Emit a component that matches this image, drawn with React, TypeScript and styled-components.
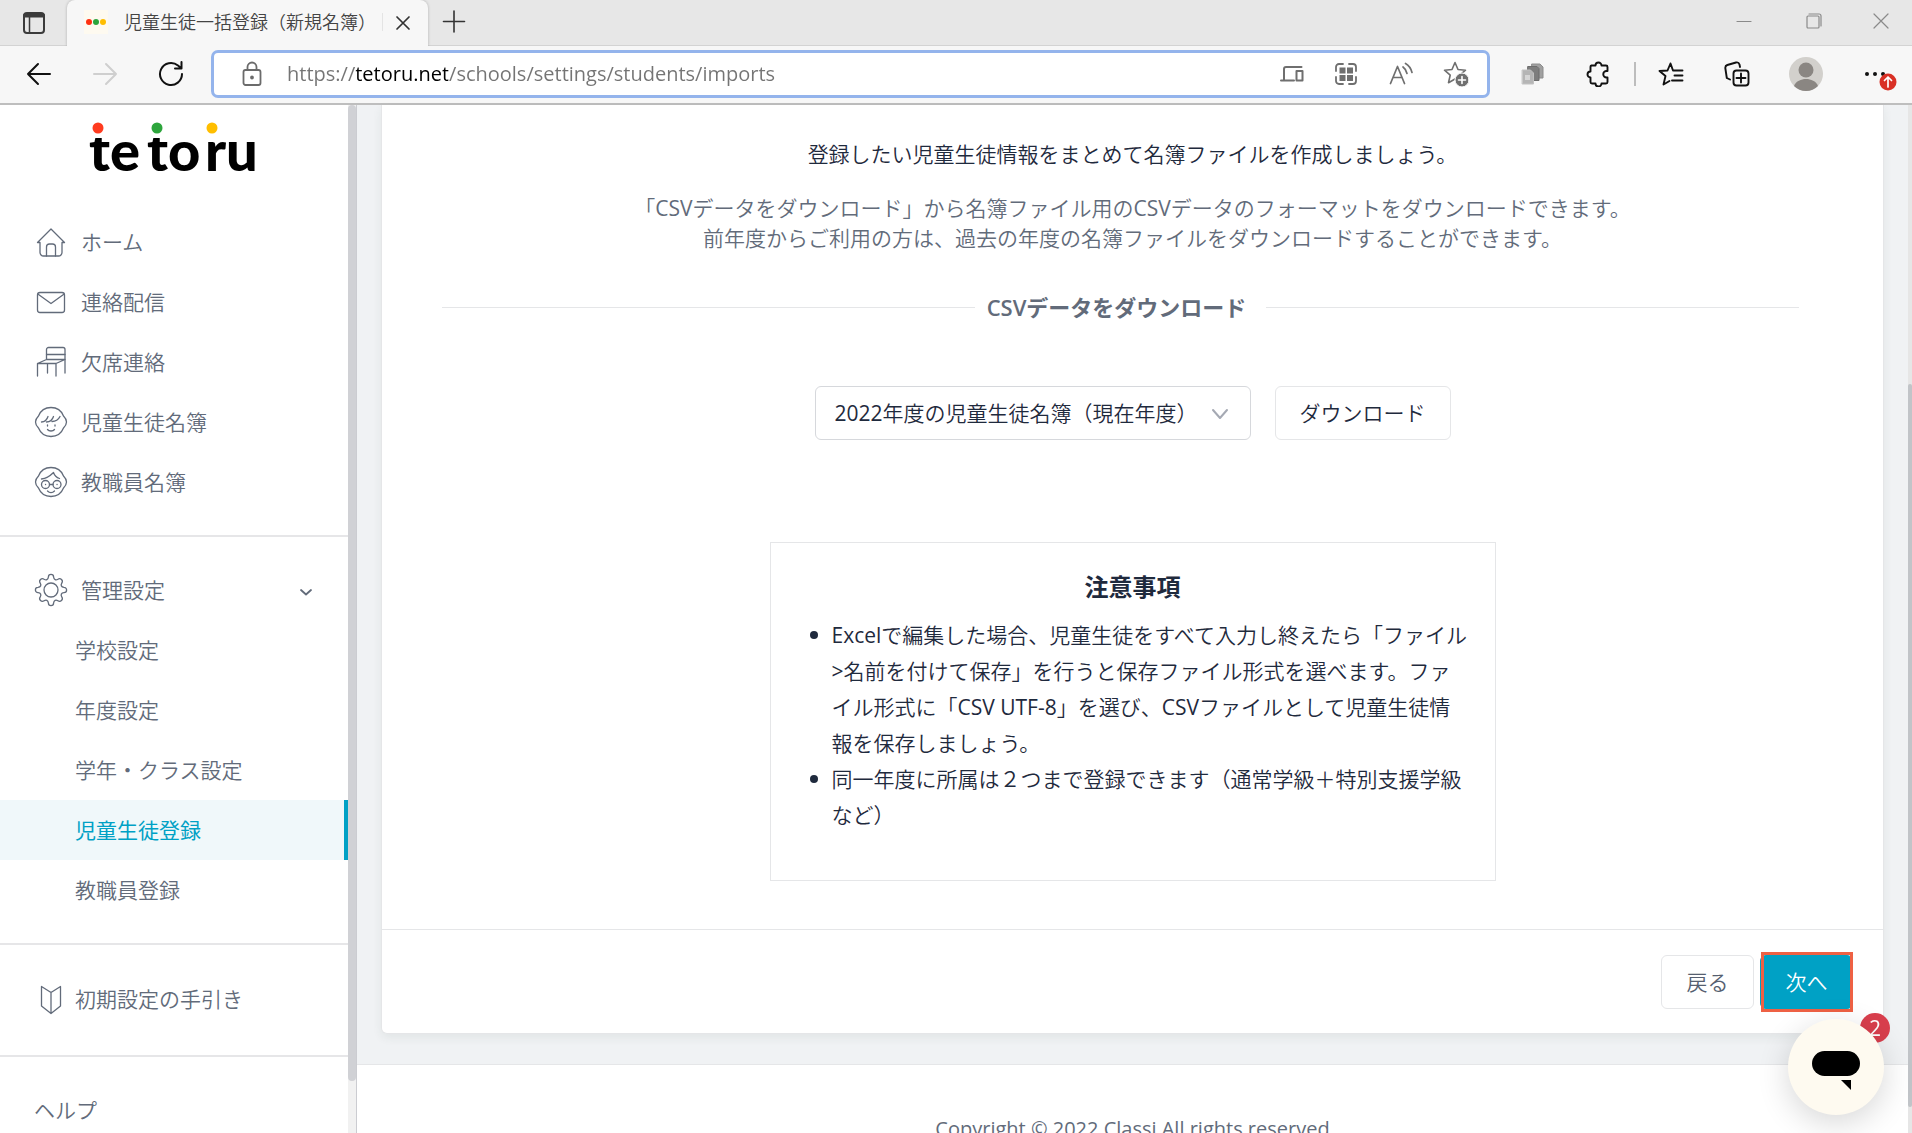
import React from 'react';
import styled, { createGlobalStyle, css } from 'styled-components';

const textStack = '"Open Sans", "Noto Sans CJK JP DemiLight", "Noto Sans CJK JP", sans-serif';
const strongStack = '"Open Sans", "Noto Sans CJK JP", sans-serif';
const ink = '#1f2a3d';
const slate = '#626b7a';
const line = '#e5e6e8';
const teal = '#00a1c5';

const GlobalStyle = createGlobalStyle`
  *, *::before, *::after { box-sizing: border-box; }
  body { margin: 0; font-family: ${textStack}; color: ${ink}; background: #fff; }
  button, input, select { font: inherit; color: inherit; margin: 0; }
  ul { margin: 0; padding: 0; list-style: none; }
  p, h2 { margin: 0; }
  svg { display: block; flex: none; }
`;

const Window = styled.div`
  height: 100vh;
  display: flex;
  flex-direction: column;
  overflow: hidden;
`;

/* ---------- browser chrome ---------- */

const TitleBar = styled.header`
  display: flex;
  height: 46px;
  background: #e7e7e7;
  border-bottom: 1px solid #d3d3d3;
`;

const PlainButton = styled.button`
  display: flex;
  align-items: center;
  justify-content: center;
  flex: none;
  padding: 0;
  border: 0;
  background: none;
`;

const BarButton = styled(PlainButton)<{ $width: number }>`
  width: ${(p) => p.$width}px;
  height: 100%;
`;

const BrowserTab = styled.div`
  display: flex;
  align-items: center;
  width: 361px;
  height: 46px;
  padding: 0 14px 3px 17px;
  background: #f7f7f7;
  border-radius: 8px 8px 0 0;
  box-shadow: 0 0 3px rgba(0, 0, 0, 0.25);
  clip-path: inset(0 -4px 0 -4px);
`;

const TabTitle = styled.span`
  flex: 1;
  margin-left: 16px;
  font-size: 18px;
  line-height: 26px;
  color: #444;
  white-space: nowrap;
`;

const TabRule = styled.span`
  width: 1px;
  height: 18px;
  margin-right: 9px;
  background: #e4e4e4;
`;

const WindowControls = styled.div`
  display: flex;
  height: 42px;
  margin-left: auto;
`;

const Toolbar = styled.div`
  display: flex;
  align-items: stretch;
  height: 59px;
  flex: none;
  padding: 4px 0 5px 6px;
  background: #f7f7f7;
  border-bottom: 2px solid #bebebe;
`;

const AddressBar = styled.label`
  display: flex;
  flex: 1;
  align-items: center;
  margin: 0 10px 0 7px;
  padding: 0 4px 0 27px;
  background: #fff;
  border: 3px solid #94b4ec;
  border-radius: 7px;
`;

const AddressInput = styled.input`
  flex: 1;
  min-width: 0;
  height: 30px;
  margin-left: 24px;
  padding: 0;
  border: 0;
  outline: 0;
  font-size: 20px;
  line-height: 30px;
  color: transparent;
  background: linear-gradient(90deg, #747474 69px, #000 69px, #000 161px, #747474 161px);
  background-clip: text;
  -webkit-background-clip: text;
`;

const ToolbarRule = styled.span`
  width: 2px;
  height: 24px;
  align-self: center;
  margin: 0 2px;
  background: #bdbdbd;
`;

/* ---------- page ---------- */

const Page = styled.div`
  display: flex;
  flex: 1;
  min-height: 0;
`;

const Sidebar = styled.aside`
  width: 348px;
  flex: none;
  overflow: hidden;
  background: #fff;
`;

const Track = styled.div<{ $width: number; $color: string }>`
  width: ${(p) => p.$width}px;
  flex: none;
  display: flex;
  flex-direction: column;
  background: ${(p) => p.$color};
`;

const SideTrack = styled(Track)`
  border-right: 1px solid #cbccd1;
`;

const Space = styled.div<{ $grow: number }>`
  flex: ${(p) => p.$grow} 0 0;
`;

const Thumb = styled.div<{ $grow: number; $color: string }>`
  flex: ${(p) => p.$grow} 0 0;
  border-radius: 4px;
  background: ${(p) => p.$color};
`;

const LogoLink = styled.a`
  display: block;
  height: 107px;
  padding: 3px 0 0 80px;
`;

const NavSection = styled.nav<{ $top: number; $bottom: number }>`
  padding: ${(p) => p.$top}px 0 ${(p) => p.$bottom}px;
  & + & { border-top: 2px solid #e6e6e8; }
`;

const navRow = css`
  display: flex;
  align-items: center;
  width: 100%;
  height: 60px;
  font-size: 21px;
  line-height: 30px;
  color: ${slate};
  text-decoration: none;
`;

const NavLink = styled.a<{ $gap?: number }>`
  ${navRow}
  gap: ${(p) => p.$gap ?? 13}px;
  padding-left: 34px;
`;

const NavToggle = styled.button`
  ${navRow}
  gap: 13px;
  padding: 0 35px 0 34px;
  border: 0;
  background: none;
  svg:last-child { margin-left: auto; }
`;

const SubLink = styled.a<{ $active?: boolean }>`
  ${navRow}
  padding-left: 75px;
  ${(p) =>
    p.$active &&
    css`
      color: ${teal};
      font-family: ${strongStack};
      background: #f0f8fa;
      border-right: 4px solid ${teal};
    `}
`;

const Main = styled.main`
  flex: 1;
  min-width: 0;
  background: #f0f2f4;
`;

const Card = styled.section`
  display: flex;
  flex-direction: column;
  align-items: center;
  margin: 0 24px 30px;
  padding-top: 34px;
  background: #fff;
  border: 1px solid ${line};
  border-top: 0;
  border-radius: 0 0 6px 6px;
  box-shadow: 0 4px 10px rgba(40, 70, 60, 0.07);
`;

const Lead = styled.p`
  font-size: 21px;
  line-height: 30px;
`;

const Note = styled.p`
  margin-top: 24px;
  font-size: 21px;
  line-height: 30px;
  color: ${slate};
  text-align: center;
`;

const RuledHeading = styled.h2`
  display: flex;
  align-items: center;
  align-self: stretch;
  margin: 39px 84px 0 60px;
  font-family: ${strongStack};
  font-size: 22px;
  font-weight: 600;
  line-height: 30px;
  color: ${slate};
  &::before, &::after {
    content: '';
    flex: 1;
    height: 1px;
    background: ${line};
  }
  span { padding: 0 20px 0 12px; }
`;

const DownloadRow = styled.div`
  display: flex;
  gap: 24px;
  margin-top: 64px;
`;

const SelectBox = styled.label`
  position: relative;
  width: 436px;
  svg {
    position: absolute;
    right: 22px;
    top: 21px;
    pointer-events: none;
  }
`;

const YearSelect = styled.select`
  appearance: none;
  width: 100%;
  height: 54px;
  padding: 0 50px 0 19px;
  font-size: 21px;
  line-height: 30px;
  color: ${ink};
  background: #fff;
  border: 1px solid #d6d8dc;
  border-radius: 6px;
`;

const Button = styled.button`
  min-width: 93px;
  height: 54px;
  padding: 0 24px;
  font-size: 21px;
  line-height: 30px;
  background: #fff;
  border: 1px solid ${line};
  border-radius: 6px;
`;

const BackButton = styled(Button)`
  color: #565f70;
`;

const NextButton = styled(Button)`
  position: relative;
  color: #fff;
  background: ${teal};
  border-color: ${teal};
  &::after {
    content: '';
    position: absolute;
    inset: -4px -1px -4px 0;
    border: 3px solid #ee6144;
  }
`;

const NoticeBox = styled.section`
  width: 726px;
  margin: 102px 0 48px;
  padding: 24px 26px 47px 61px;
  border: 1px solid ${line};
`;

const NoticeTitle = styled.h2`
  margin: 0 0 10px -35px;
  font-family: ${strongStack};
  font-size: 24px;
  font-weight: 700;
  line-height: 40px;
  text-align: center;
`;

const NoticeList = styled.ul`
  font-size: 21px;
  line-height: 36px;
`;

const NoticeItem = styled.li`
  position: relative;
  &::before {
    content: '';
    position: absolute;
    left: -22px;
    top: 14px;
    width: 8px;
    height: 8px;
    border-radius: 50%;
    background: ${ink};
  }
`;

const CardFooter = styled.footer`
  display: flex;
  align-self: stretch;
  justify-content: flex-end;
  gap: 6px;
  padding: 25px 30px 24px;
  border-top: 1px solid ${line};
`;

const SiteFooter = styled.footer`
  height: 120px;
  padding-top: 49px;
  background: #fff;
  border-top: 1px solid ${line};
  font-size: 20px;
  line-height: 30px;
  color: ${slate};
  text-align: center;
`;

const Chat = styled.button`
  position: fixed;
  right: 28px;
  bottom: 18px;
  width: 96px;
  height: 96px;
  padding: 0;
  border: 0;
  background: none;
`;

const ChatBadge = styled.span`
  position: absolute;
  top: -6px;
  right: -6px;
  width: 30px;
  height: 30px;
  border-radius: 50%;
  background: #d93f4d;
  color: #fff;
  font-size: 21px;
  line-height: 30px;
  text-align: center;
`;

const ChatFace = styled.span`
  position: relative;
  display: flex;
  align-items: center;
  justify-content: center;
  width: 96px;
  height: 96px;
  padding-top: 8px;
  border-radius: 50%;
  background: #fefaf0;
  box-shadow: 0 8px 32px rgba(0, 0, 0, 0.16);
`;

/* ---------- drawings ---------- */

type IconProps = {
  w?: number;
  h?: number;
  color?: string;
  stroke?: number;
  children: React.ReactNode;
};

const Icon = ({ w = 24, h = 24, color = '#111', stroke = 2, children }: IconProps) => (
  <svg
    width={w}
    height={h}
    viewBox={`0 0 ${w} ${h}`}
    fill="none"
    stroke={color}
    strokeWidth={stroke}
    strokeLinecap="round"
    strokeLinejoin="round"
    aria-hidden="true"
  >
    {children}
  </svg>
);

const Logo = () => (
  <svg width="190" height="90" viewBox="-6 -10 190 90" role="img" aria-label="tetoru">
    <g fontFamily='"Lato", sans-serif' fontWeight="900" fontSize="56" fill="#000">
      <text x="3" y="53">te</text>
      <text x="61" y="53">to</text>
      <text x="119" y="53">ru</text>
    </g>
    <path d="M0 0h176v20H0z" fill="#fff" />
    <circle cx="12" cy="10" r="5.5" fill="#ff3b1f" />
    <circle cx="71" cy="10" r="5.5" fill="#2da53c" />
    <circle cx="126" cy="10" r="5.5" fill="#ffbe00" />
  </svg>
);

const side = { w: 34, h: 34, color: slate, stroke: 1.3 };

const HomeIcon = () => (
  <Icon {...side}>
    <path d="M6 17.500H3.500L17 4l13.500 13.500H28v10a3.500 3.500 0 0 1-3.500 3.500h-15A3.500 3.500 0 0 1 6 27.500V17.500" />
    <path d="M12.500 31v-9a3 3 0 0 1 3-3h3a3 3 0 0 1 3 3v9" />
  </Icon>
);
const MailIcon = () => (
  <Icon {...side}>
    <rect x="3.500" y="7.500" width="27" height="20" rx="2.500" />
    <path d="M4.500 9.500 17 18.500l12.500-9" />
  </Icon>
);
const ChairIcon = () => (
  <Icon {...side}>
    <path d="M12.500 14V4.500a2 2 0 0 1 2-2H29a2 2 0 0 1 2 2V28" />
    <path d="M12.500 9.500H31M12.500 14.500H31L22 18.500H3.500l9-4M3.500 18.500V31M13.500 18.500V28M22 18.500V31" />
  </Icon>
);
const head = 'M17 2.500c6 0 10.500 3.500 12.500 8.500 1.500 1.500 3 3.500 3 6s-1.500 4.500-3 6c-2 5-6.500 8.500-12.500 8.500S6.500 28 4.500 23c-1.500-1.500-3-3.500-3-6s1.500-4.500 3-6C6.500 6 11 2.500 17 2.500z';
const StudentIcon = () => (
  <Icon {...side}>
    <path d={head} />
    <path d="M7.500 17c3 0 5.500-2.500 6.500-5.500M12.500 17c3.500 0 6-2.500 7-5.500M18 16.500c4 0 6.500-2 8-5" />
    <path d="M13.500 20v1M21 20v1M13.500 24.500c1.500 2 5.500 2 7 0" />
  </Icon>
);
const TeacherIcon = () => (
  <Icon {...side}>
    <path d={head} />
    <path d="M7.500 14c5-.5 8-2.500 12-6.500 1 3 3 5 6 6" />
    <circle cx="11.500" cy="19.500" r="4" />
    <circle cx="23" cy="19.500" r="4" />
    <path d="M15.500 19.500H19M11.500 19.500h.1M23 19.500h.1M13.500 26c2 2 5 2 7 0" />
  </Icon>
);
const GearIcon = () => (
  <Icon {...side}>
    <path d="M14.400 4a2.600 2.600 0 0 1 5.200 0c.3 2.800 2.300 3.500 4.300 2.200 2.600-1.800 5.700 1.300 3.900 3.900-1.300 2-.6 4 2.200 4.300a2.600 2.600 0 0 1 0 5.200c-2.800.3-3.500 2.300-2.200 4.300 1.800 2.600-1.300 5.700-3.900 3.900-2-1.300-4-.6-4.300 2.200a2.600 2.600 0 0 1-5.200 0c-.3-2.800-2.300-3.500-4.300-2.200-2.600 1.800-5.700-1.300-3.900-3.900 1.300-2 .6-4-2.200-4.300a2.600 2.600 0 0 1 0-5.200c2.800-.3 3.500-2.300 2.200-4.300-1.800-2.600 1.300-5.700 3.900-3.900 2 1.300 4 .6 4.300-2.200z" />
    <circle cx="17" cy="17" r="7" />
  </Icon>
);
const GuideIcon = () => (
  <Icon {...side}>
    <path d="M7.500 4.500l9.500 6 9.500-6V24L17 31.500 7.500 24zM17 10.500v21" />
  </Icon>
);

const starPath = 'M12 1.500l3 7 7.500.7-5.700 5 1.700 7.500L12 18l-6.500 3.700 1.700-7.500-5.700-5L9 8.500z';

const navItems = [
  { label: 'ホーム', icon: <HomeIcon /> },
  { label: '連絡配信', icon: <MailIcon /> },
  { label: '欠席連絡', icon: <ChairIcon /> },
  { label: '児童生徒名簿', icon: <StudentIcon /> },
  { label: '教職員名簿', icon: <TeacherIcon /> },
];

const settingItems = ['学校設定', '年度設定', '学年・クラス設定', '児童生徒登録', '教職員登録'];

const BrowserChrome = () => (
  <>
    <TitleBar>
      <BarButton $width={67} aria-label="タブ操作メニュー">
        <Icon w={24} h={32} color="#3b3b3b">
          <rect x="2" y="6" width="20" height="20" rx="3" />
          <path d="M3 8.500h18" strokeWidth="4" />
          <path d="M7.500 10v16" strokeWidth="1.500" />
        </Icon>
      </BarButton>
      <BrowserTab>
        <Icon w={24} h={24} stroke={0}>
          <rect width="24" height="24" fill="#fefaf0" />
          <circle cx="5" cy="12" r="3" fill="#ff3010" />
          <circle cx="12" cy="12" r="3" fill="#2da53c" />
          <circle cx="19" cy="12" r="3" fill="#ffbe00" />
        </Icon>
        <TabTitle>児童生徒一括登録（新規名簿）</TabTitle>
        <TabRule />
        <PlainButton aria-label="タブを閉じる">
          <Icon w={22} h={24} color="#333" stroke={1.700}>
            <path d="M5 7l12 12M17 7 5 19" />
          </Icon>
        </PlainButton>
      </BrowserTab>
      <BarButton $width={52} aria-label="新しいタブ">
        <Icon w={24} h={34} color="#333" stroke={1.600}>
          <path d="M12 5v21M1.500 15.500h21" />
        </Icon>
      </BarButton>
      <WindowControls>
        <BarButton $width={68} aria-label="最小化">
          <Icon w={16} h={16} color="#8a8a8a" stroke={1.200}><path d="M1 8.500h14" /></Icon>
        </BarButton>
        <BarButton $width={72} aria-label="元に戻す">
          <Icon w={16} h={16} color="#8a8a8a" stroke={1.200}>
            <rect x="1" y="3" width="12" height="12" rx="1" />
            <path d="M3 1h10a2 2 0 0 1 2 2v10" />
          </Icon>
        </BarButton>
        <BarButton $width={62} aria-label="閉じる">
          <Icon w={16} h={16} color="#8a8a8a" stroke={1.200}><path d="M1 1l14 14M15 1 1 15" /></Icon>
        </BarButton>
      </WindowControls>
    </TitleBar>
    <Toolbar>
      <BarButton $width={66} aria-label="戻る"><Icon w={26} h={24}><path d="M24 12H2M12 2 2 12l10 10" /></Icon></BarButton>
      <BarButton $width={66} aria-label="進む"><Icon w={26} h={24} color="#cfcfcf"><path d="M2 12h22M14 2l10 10-10 10" /></Icon></BarButton>
      <BarButton $width={66} aria-label="更新">
        <Icon w={26} h={26}><path d="M24 13a11 11 0 1 1-4-8.500l3 2.500M23.500 1v6.500H17" /></Icon>
      </BarButton>
      <AddressBar>
        <Icon w={22} h={26} color="#6b6b6b" stroke={1.800}>
          <rect x="2.500" y="9" width="17" height="15" rx="2" />
          <path d="M6.500 9V6a4.500 4.500 0 0 1 9 0v3" />
          <circle cx="11" cy="16.500" r="1" fill="#6b6b6b" />
        </Icon>
        <AddressInput aria-label="アドレス" type="text" spellCheck={false} defaultValue="https://tetoru.net/schools/settings/students/imports" />
        <BarButton $width={55} aria-label="デバイスに送信">
          <Icon color="#6f6f6f"><path d="M21.500 5H6a2 2 0 0 0-2 2v11M1 18.500h13" /><rect x="16.500" y="9" width="6" height="9.500" /></Icon>
        </BarButton>
        <BarButton $width={54} aria-label="アプリ">
          <Icon color="#6f6f6f" stroke={1.800}>
            <path d="M2 9V5a3 3 0 0 1 3-3h4M15 2h4a3 3 0 0 1 3 3v4M22 15v4a3 3 0 0 1-3 3h-4M9 22H5a3 3 0 0 1-3-3v-4" />
            <path d="M5.500 5.500h6v6h-6zM13 5.500h6v6h-6zM5.500 13h6v6h-6zM13 13h6v6h-6z" fill="#6f6f6f" stroke="none" />
          </Icon>
        </BarButton>
        <BarButton $width={55} aria-label="音声で読み上げる">
          <Icon color="#6f6f6f" stroke={1.700}>
            <path d="M1.500 21.500 8.500 4.500l7 17M4 15.500h9M14 5c2 1.500 3.500 3.500 4 6.500M16.500 1.500c3.500 2 5.500 5 6.500 9" />
          </Icon>
        </BarButton>
        <BarButton $width={55} aria-label="お気に入りに追加">
          <Icon w={26} h={26} color="#6f6f6f" stroke={1.600}>
            <path d={starPath} />
            <circle cx="19" cy="19" r="7" fill="#6f6f6f" stroke="#fff" strokeWidth="1" />
            <path d="M19 15.500v7M15.500 19h7" stroke="#fff" />
          </Icon>
        </BarButton>
      </AddressBar>
      <BarButton $width={66} aria-label="拡張機能のページ">
        <Icon stroke={1}>
          <path d="M11 2h8l3 3v11H11z" fill="#a0a0a0" stroke="#8c8c8c" />
          <path d="M7 4.500h9l2 2v12H7z" fill="#7d7d7d" stroke="#6d6d6d" />
          <path d="M1.500 8h8l3 3v11h-11z" fill="#b5b5b5" stroke="#c2c2c2" />
          <path d="M4 13h5v5H4z" fill="#d6d6d6" stroke="none" />
        </Icon>
      </BarButton>
      <BarButton $width={66} aria-label="拡張機能">
        <Icon w={26} h={26} stroke={1.900}>
          <path d="M5.500 4.500h4a3 3 0 0 1 6 0H20a1.500 1.500 0 0 1 1.500 1.500v4h-1a3 3 0 0 0 0 6.500h1V21a1.500 1.500 0 0 1-1.500 1.500h-4.500a3 3 0 0 1-6 0H6A1.500 1.500 0 0 1 4.500 21v-4.500a3 3 0 0 1 0-6V6A1.500 1.500 0 0 1 5.500 4.500z" />
        </Icon>
      </BarButton>
      <ToolbarRule />
      <BarButton $width={66} aria-label="お気に入り">
        <Icon w={26} h={26} stroke={1.900}>
          <path d="M15 9.500 12.500 2.500 9.500 9.500 1.500 10l6 5-2 8.500 6-3.500M16 9.500h8.500M16.500 14.500h8M14 19.500h10.500" />
        </Icon>
      </BarButton>
      <BarButton $width={66} aria-label="コレクション">
        <Icon w={26} h={26} stroke={1.900}>
          <rect x="9.500" y="9.500" width="15" height="15" rx="3" />
          <path d="M17 12.500v9M12.500 17h9M6 18.500 2.800 17 1.300 7a3 3 0 0 1 2-3L12 1.500a3 3 0 0 1 3.500 2L16 6" />
        </Icon>
      </BarButton>
      <BarButton $width={72} aria-label="プロファイル">
        <Icon w={34} h={34} stroke={0}>
          <circle cx="17" cy="17" r="17" fill="#d2d0cc" />
          <circle cx="17" cy="13" r="7.500" fill="#8a8682" />
          <path d="M5 29c2-5 7-7 12-7s10 2 12 7a17 17 0 0 1-24 0z" fill="#8a8682" />
        </Icon>
      </BarButton>
      <BarButton $width={70} aria-label="設定など">
        <Icon w={40} h={34} stroke={0}>
          <circle cx="10" cy="17" r="2" fill="#111" />
          <circle cx="18" cy="17" r="2" fill="#111" />
          <circle cx="26" cy="17" r="2" fill="#111" />
          <circle cx="31" cy="25" r="8.500" fill="#d93025" />
          <path d="M31 30V20.500M27.500 23.500l3.500-3.500 3.500 3.500" stroke="#fff" strokeWidth="1.700" />
        </Icon>
      </BarButton>
    </Toolbar>
  </>
);

const SideNavigation = () => (
  <Sidebar>
    <LogoLink href="#"><Logo /></LogoLink>
    <NavSection $top={0} $bottom={23}>
      {navItems.map((item) => (
        <NavLink key={item.label} href="#">{item.icon}{item.label}</NavLink>
      ))}
    </NavSection>
    <NavSection $top={23} $bottom={23}>
      <NavToggle type="button" aria-expanded="true">
        <GearIcon />
        管理設定
        <Icon w={14} h={14} color={slate} stroke={1.800}><path d="M2 7l5 4.500L12 7" /></Icon>
      </NavToggle>
      {settingItems.map((label) => (
        <SubLink key={label} href="#" $active={label === '児童生徒登録'}>{label}</SubLink>
      ))}
    </NavSection>
    <NavSection $top={24} $bottom={26}>
      <NavLink href="#" $gap={7}><GuideIcon />初期設定の手引き</NavLink>
    </NavSection>
    <NavSection $top={23} $bottom={23}>
      <NavLink href="#">ヘルプ</NavLink>
    </NavSection>
  </Sidebar>
);

export default function App() {
  return (
    <Window>
      <GlobalStyle />
      <BrowserChrome />
      <Page>
        <SideNavigation />
        <SideTrack $width={9} $color="#f1f1f1">
          <Thumb $grow={976} $color="#d0d1d5" />
          <Space $grow={52} />
        </SideTrack>
        <Main>
          <Card>
            <Lead>登録したい児童生徒情報をまとめて名簿ファイルを作成しましょう。</Lead>
            <Note>
              「CSVデータをダウンロード」から名簿ファイル用のCSVデータのフォーマットをダウンロードできます。
              <br />
              前年度からご利用の方は、過去の年度の名簿ファイルをダウンロードすることができます。
            </Note>
            <RuledHeading><span>CSVデータをダウンロード</span></RuledHeading>
            <DownloadRow>
              <SelectBox>
                <YearSelect aria-label="年度">
                  <option>2022年度の児童生徒名簿（現在年度）</option>
                </YearSelect>
                <Icon w={18} h={14} color="#a5a9b3" stroke={2}><path d="M2 3l7 8 7-8" /></Icon>
              </SelectBox>
              <Button type="button">ダウンロード</Button>
            </DownloadRow>
            <NoticeBox>
              <NoticeTitle>注意事項</NoticeTitle>
              <NoticeList>
                <NoticeItem>
                  Excelで編集した場合、児童生徒をすべて入力し終えたら「ファイル&gt;名前を付けて保存」を行うと保存ファイル形式を選べます。ファイル形式に「CSV UTF-8」を選び、CSVファイルとして児童生徒情報を保存しましょう。
                </NoticeItem>
                <NoticeItem>同一年度に所属は２つまで登録できます（通常学級＋特別支援学級など）</NoticeItem>
              </NoticeList>
            </NoticeBox>
            <CardFooter>
              <BackButton type="button">戻る</BackButton>
              <NextButton type="button">次へ</NextButton>
            </CardFooter>
          </Card>
          <SiteFooter>Copyright © 2022 Classi All rights reserved</SiteFooter>
        </Main>
        <Track $width={4} $color="#e6e6e6">
          <Space $grow={279} />
          <Thumb $grow={723} $color="#c1c4c8" />
          <Space $grow={26} />
        </Track>
      </Page>
      <Chat type="button" aria-label="チャット">
        <ChatBadge>2</ChatBadge>
        <ChatFace>
          <Icon w={48} h={40} stroke={0}>
            <rect width="48" height="25" rx="12.500" fill="#000" />
            <path d="M29 29h10v10z" fill="#000" />
          </Icon>
        </ChatFace>
      </Chat>
    </Window>
  );
}
